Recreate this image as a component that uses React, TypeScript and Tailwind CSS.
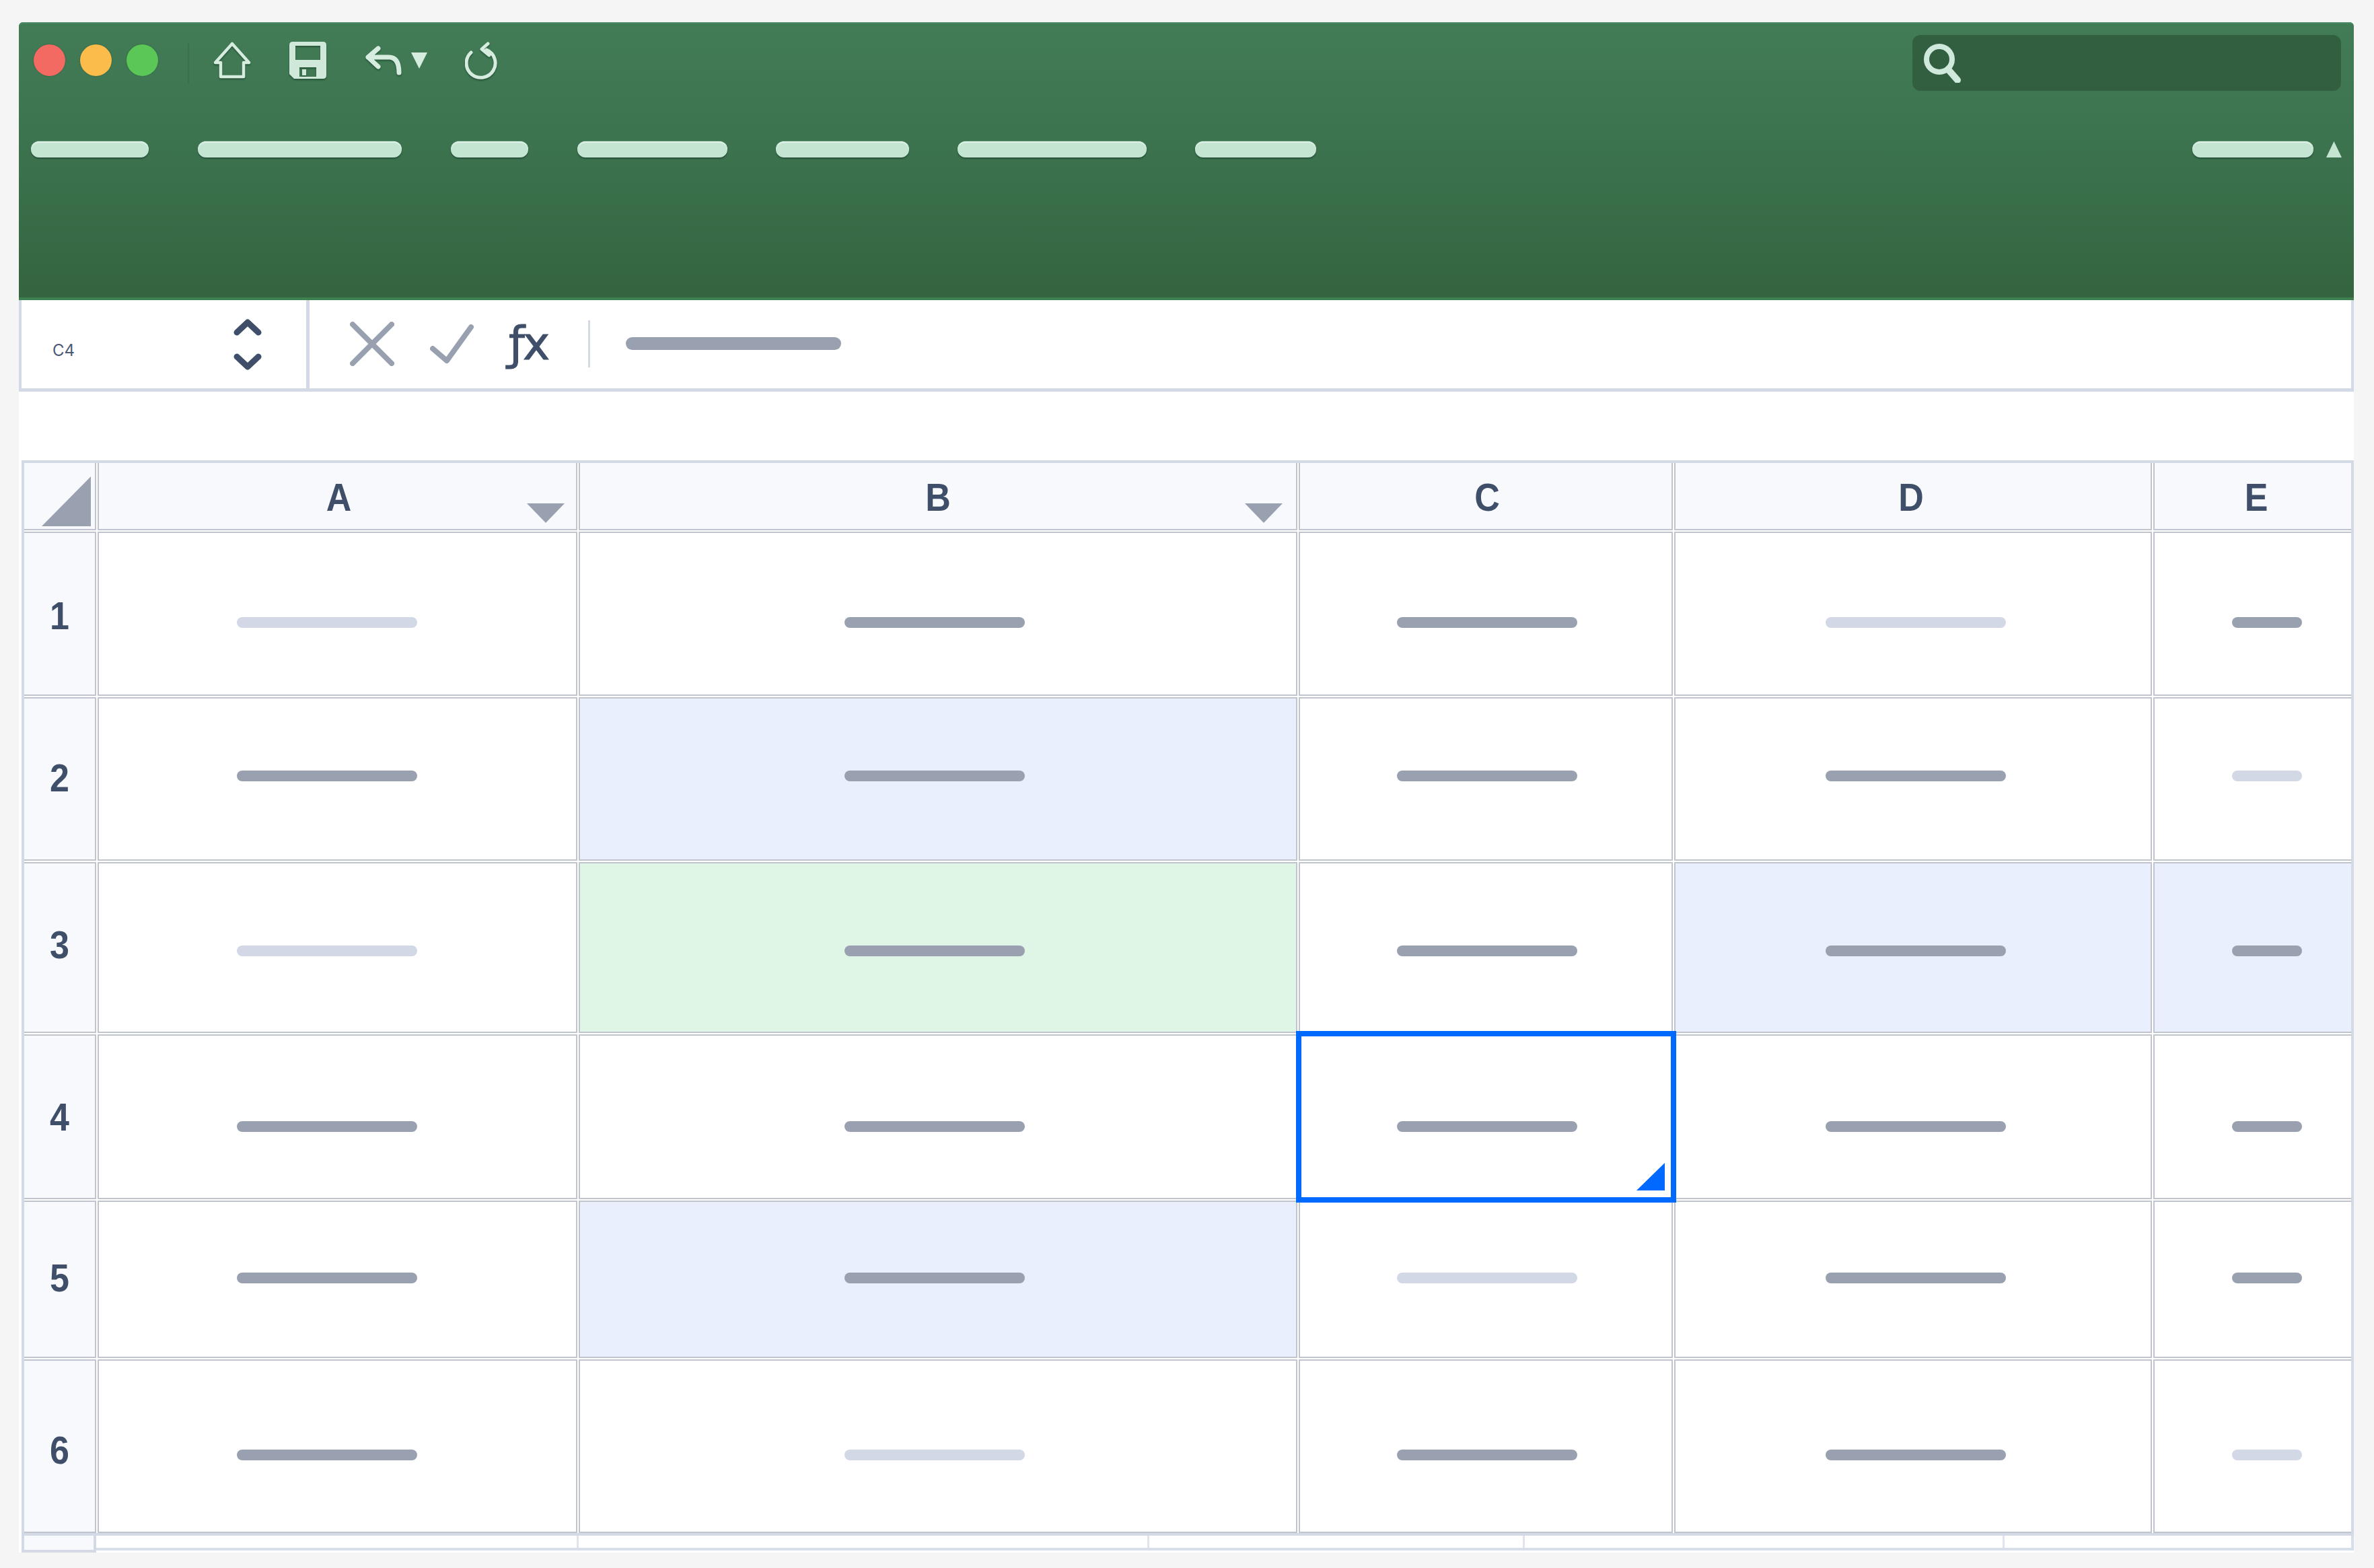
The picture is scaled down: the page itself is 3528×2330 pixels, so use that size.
const colTrack = "grid-cols-[107px_713px_1068px_556px_710px_1fr]";

const dark = "bg-[#99a1b0]";
const light = "bg-[#d2d8e5]";

type Bar = { tone: "dark" | "light"; bg?: string };

const columns = [
  { label: "A", labelX: "translate-x-[2px]", barW: "w-[268px]", barX: "-translate-x-[16px]" },
  { label: "B", labelX: "translate-x-0", barW: "w-[268px]", barX: "-translate-x-[5px]" },
  { label: "C", labelX: "translate-x-[2px]", barW: "w-[268px]", barX: "translate-x-[2px]" },
  { label: "D", labelX: "-translate-x-[3px]", barW: "w-[268px]", barX: "translate-x-[4px]" },
  { label: "E", labelX: "translate-x-[5px]", barW: "w-[104px]", barX: "translate-x-[21px]" },
];

const rows: { n: string; h: string; barY: string; labelY: string; cells: Bar[] }[] = [
  { n: "1", h: "h-[244px]", barY: "translate-y-[13px]", labelY: "translate-y-[3px]", cells: [{ tone: "light" }, { tone: "dark" }, { tone: "dark" }, { tone: "light" }, { tone: "dark" }] },
  { n: "2", h: "h-[243px]", barY: "-translate-y-[5px]", labelY: "-translate-y-[2px]", cells: [{ tone: "dark" }, { tone: "dark", bg: "bg-[#e9effc]" }, { tone: "dark" }, { tone: "dark" }, { tone: "light" }] },
  { n: "3", h: "h-[254px]", barY: "translate-y-[5px]", labelY: "-translate-y-[4px]", cells: [{ tone: "light" }, { tone: "dark", bg: "bg-[#dff5e5]" }, { tone: "dark" }, { tone: "dark", bg: "bg-[#e9effc]" }, { tone: "dark", bg: "bg-[#e9effc]" }] },
  { n: "4", h: "h-[245px]", barY: "translate-y-[14px]", labelY: "translate-y-0", cells: [{ tone: "dark" }, { tone: "dark" }, { tone: "dark" }, { tone: "dark" }, { tone: "dark" }] },
  { n: "5", h: "h-[234px]", barY: "-translate-y-[2px]", labelY: "-translate-y-[2px]", cells: [{ tone: "dark" }, { tone: "dark", bg: "bg-[#e9effc]" }, { tone: "light" }, { tone: "dark" }, { tone: "dark" }] },
  { n: "6", h: "h-[258px]", barY: "translate-y-[13px]", labelY: "translate-y-[6px]", cells: [{ tone: "dark" }, { tone: "light" }, { tone: "dark" }, { tone: "dark" }, { tone: "light" }] },
];

function Pill({ className }: { className: string }) {
  return <div className={`h-[24px] rounded-full bg-[#c5e5d3] shadow-[inset_0_2px_1px_#dff2e8,0_2px_2px_#27503a,0_-1px_1px_#4f8a68] ${className}`} />;
}

function RibbonIcons() {
  const glow = { filter: "drop-shadow(0 2px 1px rgba(30,70,45,0.7))" };
  return (
    <div className="flex items-center">
      <svg width="56" height="55" viewBox="0 0 56 55" fill="none" stroke="#d5ecdf" strokeWidth="4.5" strokeLinejoin="round" style={glow} className="ml-[36px]">
        <path d="M28 3 L53 31 H45 V52 H11 V31 H3 Z" />
      </svg>
      <svg width="55" height="55" viewBox="0 0 55 55" style={glow} className="ml-[57px]">
        <path fillRule="evenodd" fill="#cfe8da" d="M5 0 H50 Q55 0 55 5 V50 Q55 55 50 55 H7 L0 48 V5 Q0 0 5 0 Z M9 6 V27 H46 V6 Z M15 38 V52 H40 V38 Z" />
        <rect x="19" y="41" width="6" height="9" fill="#cfe8da" />
      </svg>
      <svg width="56" height="44" viewBox="0 0 56 44" fill="none" stroke="#d5ecdf" strokeWidth="7" strokeLinecap="round" strokeLinejoin="round" style={glow} className="ml-[57px]">
        <path d="M20 4 L5 17 L20 31 M5 17 H36 Q51 17 51 40" />
      </svg>
      <svg width="24" height="24" viewBox="0 0 24 24" fill="#d5ecdf" className="ml-[13px]">
        <path d="M0 0 H24 L12 24 Z" />
      </svg>
      <svg width="48" height="56" viewBox="0 0 48 56" fill="none" stroke="#d5ecdf" strokeWidth="5" strokeLinecap="round" strokeLinejoin="round" style={glow} className="ml-[56px]">
        <path d="M9 16 A21.5 21.5 0 1 0 32 12 M34 3 L25 11 L36 20" />
      </svg>
    </div>
  );
}

function Ribbon() {
  return (
    <div className="h-[413px] shrink-0 rounded-t-[6px] border-b-[4px] border-[#3e8050] bg-gradient-to-b from-[#427c57] via-[#3b724d] to-[#346440] shadow-[inset_0_2px_0_#4d8a66]">
      <div className="flex items-start justify-between pl-[22px] pr-[19px] pt-[19px]">
        <div className="flex h-[75px] items-center">
          <div className="flex items-center gap-[22px]">
            <div className="size-[47px] rounded-full bg-[#f26a62] shadow-[0_0_2px_#2c5a3d]" />
            <div className="size-[47px] rounded-full bg-[#fbbc4b] shadow-[0_0_2px_#2c5a3d]" />
            <div className="size-[47px] rounded-full bg-[#5bc757] shadow-[0_0_2px_#2c5a3d]" />
          </div>
          <div className="ml-[44px] h-[62px] w-[2px] translate-y-[4px] bg-[#3a6f4e]" />
          <RibbonIcons />
        </div>
        <div className="flex h-[83px] w-[637px] items-center rounded-[12px] bg-[#325f3f] pl-[17px]">
          <svg width="56" height="58" viewBox="0 0 56 58" fill="none" stroke="#cfe9dc" strokeLinecap="round">
            <circle cx="23" cy="23" r="19" strokeWidth="8" />
            <path d="M36 38 L50 54" strokeWidth="10" />
          </svg>
        </div>
      </div>
      <div className="mt-[75px] flex items-center pl-[18px] pr-[18px]">
        <Pill className="w-[175px]" />
        <Pill className="ml-[73px] w-[303px]" />
        <Pill className="ml-[73px] w-[115px]" />
        <Pill className="ml-[73px] w-[223px]" />
        <Pill className="ml-[72px] w-[198px]" />
        <Pill className="ml-[72px] w-[281px]" />
        <Pill className="ml-[72px] w-[180px]" />
        <Pill className="ml-auto w-[180px]" />
        <svg width="23" height="24" viewBox="0 0 23 24" fill="#c5e5d3" className="ml-[19px]">
          <path d="M11.5 0 L23 24 H0 Z" />
        </svg>
      </div>
    </div>
  );
}

function FormulaBar() {
  return (
    <div className="flex h-[136px] shrink-0 border-x-[4px] border-b-[5px] border-[#d3dae6] bg-white">
      <div className="flex w-[423px] shrink-0 items-center justify-between pl-[46px] pr-[66px]">
        <span className="mt-[18px] text-[24px] leading-none text-[#4a5a74] [font-family:Inter,sans-serif]">C4</span>
        <svg width="42" height="76" viewBox="0 0 42 76" fill="none" stroke="#3f4f69" strokeWidth="9" strokeLinecap="round" strokeLinejoin="round">
          <path d="M5 20 L21 5 L37 20 M5 56 L21 71 L37 56" />
        </svg>
      </div>
      <div className="w-[5px] shrink-0 bg-[#d3dae6]" />
      <div className="-mt-[2px] flex items-center">
        <svg width="66" height="66" viewBox="0 0 66 66" fill="none" stroke="#99a1b0" strokeWidth="8" strokeLinecap="round" className="ml-[60px]">
          <path d="M4 4 L62 62 M62 4 L4 62" />
        </svg>
        <svg width="65" height="58" viewBox="0 0 65 58" fill="none" stroke="#99a1b0" strokeWidth="8" strokeLinecap="round" strokeLinejoin="round" className="ml-[53px]">
          <path d="M4 36 L25 54 L61 4" />
        </svg>
        <span className="ml-[52px] w-[66px] whitespace-nowrap text-[68px] leading-none tracking-[-3px] text-[#3f4f69] [-webkit-text-stroke:1px_#3f4f69] [font-family:'DejaVu_Sans',sans-serif]">ƒx</span>
        <div className="ml-[52px] h-[70px] w-[3px] bg-[#d3dae6]" />
        <div className="ml-[53px] h-[19px] w-[320px] rounded-full bg-[#99a1b0]" />
      </div>
    </div>
  );
}

const label = "inline-block scale-y-110 text-[52px] font-bold leading-none text-[#3f4f69] [font-family:'Liberation_Sans',sans-serif]";
const line = "border-[#c0c4cc]";

function HeaderRow() {
  return (
    <div className={`grid h-[100px] ${colTrack} gap-x-[2px]`}>
      <div className={`flex items-end justify-end border-b-[2px] border-r-[2px] ${line} bg-[#f7f9fd] pb-[4px] pr-[6px]`}>
        <svg width="73" height="74" viewBox="0 0 73 74" fill="#99a1b0"><path d="M73 0 V74 H0 Z" /></svg>
      </div>
      {columns.map((c) => (
        <div key={c.label} className={`relative flex items-center justify-center border-x-[2px] border-b-[2px] ${line} bg-[#f7f9fd] last:border-r-0`}>
          <span className={`${label} ${c.labelX} translate-y-[2px]`}>{c.label}</span>
          {c.label === "A" && (
            <svg width="56" height="29" viewBox="0 0 56 29" fill="#99a1b0" className="absolute bottom-[9px] right-[17px]">
              <path d="M0 0 H56 L28 29 Z" />
            </svg>
          )}
          {c.label === "B" && (
            <svg width="56" height="29" viewBox="0 0 56 29" fill="#99a1b0" className="absolute bottom-[9px] right-[20px]">
              <path d="M0 0 H56 L28 29 Z" />
            </svg>
          )}
        </div>
      ))}
    </div>
  );
}

function DataRow({ row, index }: { row: (typeof rows)[number]; index: number }) {
  const selectedRow = index === 3;
  return (
    <div className={`relative grid ${row.h} ${colTrack} gap-x-[2px] ${selectedRow ? "z-10" : ""}`}>
      <div className={`flex items-center justify-center border-y-[2px] border-r-[2px] ${line} bg-[#f7f9fd]`}>
        <span className={`${label} ${row.labelY}`}>{row.n}</span>
      </div>
      {row.cells.map((cell, i) => {
        const c = columns[i];
        const selected = selectedRow && i === 2;
        return (
          <div key={c.label} className={`relative flex items-center justify-center border-x-[2px] border-y-[2px] ${line} last:border-r-0 ${cell.bg ?? "bg-white"} ${selected ? "z-10" : ""}`}>
            <div className={`h-[16px] rounded-full ${c.barW} ${c.barX} ${row.barY} ${cell.tone === "dark" ? dark : light}`} />
            {selected && (
              <div className="absolute -bottom-[7px] -left-[6px] -right-[7px] -top-[7px] border-[8px] border-[#0069ff]">
                <svg width="42" height="41" viewBox="0 0 42 41" fill="#0069ff" className="absolute bottom-[10px] right-[9px]">
                  <path d="M42 0 V41 H0 Z" />
                </svg>
              </div>
            )}
          </div>
        );
      })}
    </div>
  );
}

function FooterRow() {
  return (
    <div className="flex h-[25px] shrink-0 items-start">
      <div className="h-[25px] w-[111px] shrink-0 border-x-[4px] border-b-[4px] border-[#d3dae6] bg-[#f7f9fd]" />
      <div className="grid h-[22px] flex-1 grid-cols-[717px_848px_558px_713px_1fr] border-b-[4px] border-r-[4px] border-[#d8deea] bg-white">
        <div className="border-r-[3px] border-[#dfe4ed]" />
        <div className="border-r-[3px] border-[#dfe4ed]" />
        <div className="border-r-[3px] border-[#dfe4ed]" />
        <div className="border-r-[3px] border-[#dfe4ed]" />
        <div />
      </div>
    </div>
  );
}

export default function App() {
  return (
    <div className="h-[2330px] w-[3528px] overflow-hidden bg-[#f5f5f5] pl-[28px] pt-[33px]">
      <div className="flex h-[2274px] w-[3470px] flex-col bg-white">
        <Ribbon />
        <FormulaBar />
        <div className="h-[102px] shrink-0" />
        <div className="ml-[4px] flex flex-1 flex-col">
          <div className="flex flex-col gap-y-[2px] border-x-[4px] border-b-[4px] border-t-[4px] border-[#d3dae6]">
            <HeaderRow />
            {rows.map((r, i) => <DataRow key={r.n} row={r} index={i} />)}
          </div>
          <FooterRow />
        </div>
      </div>
    </div>
  );
}
